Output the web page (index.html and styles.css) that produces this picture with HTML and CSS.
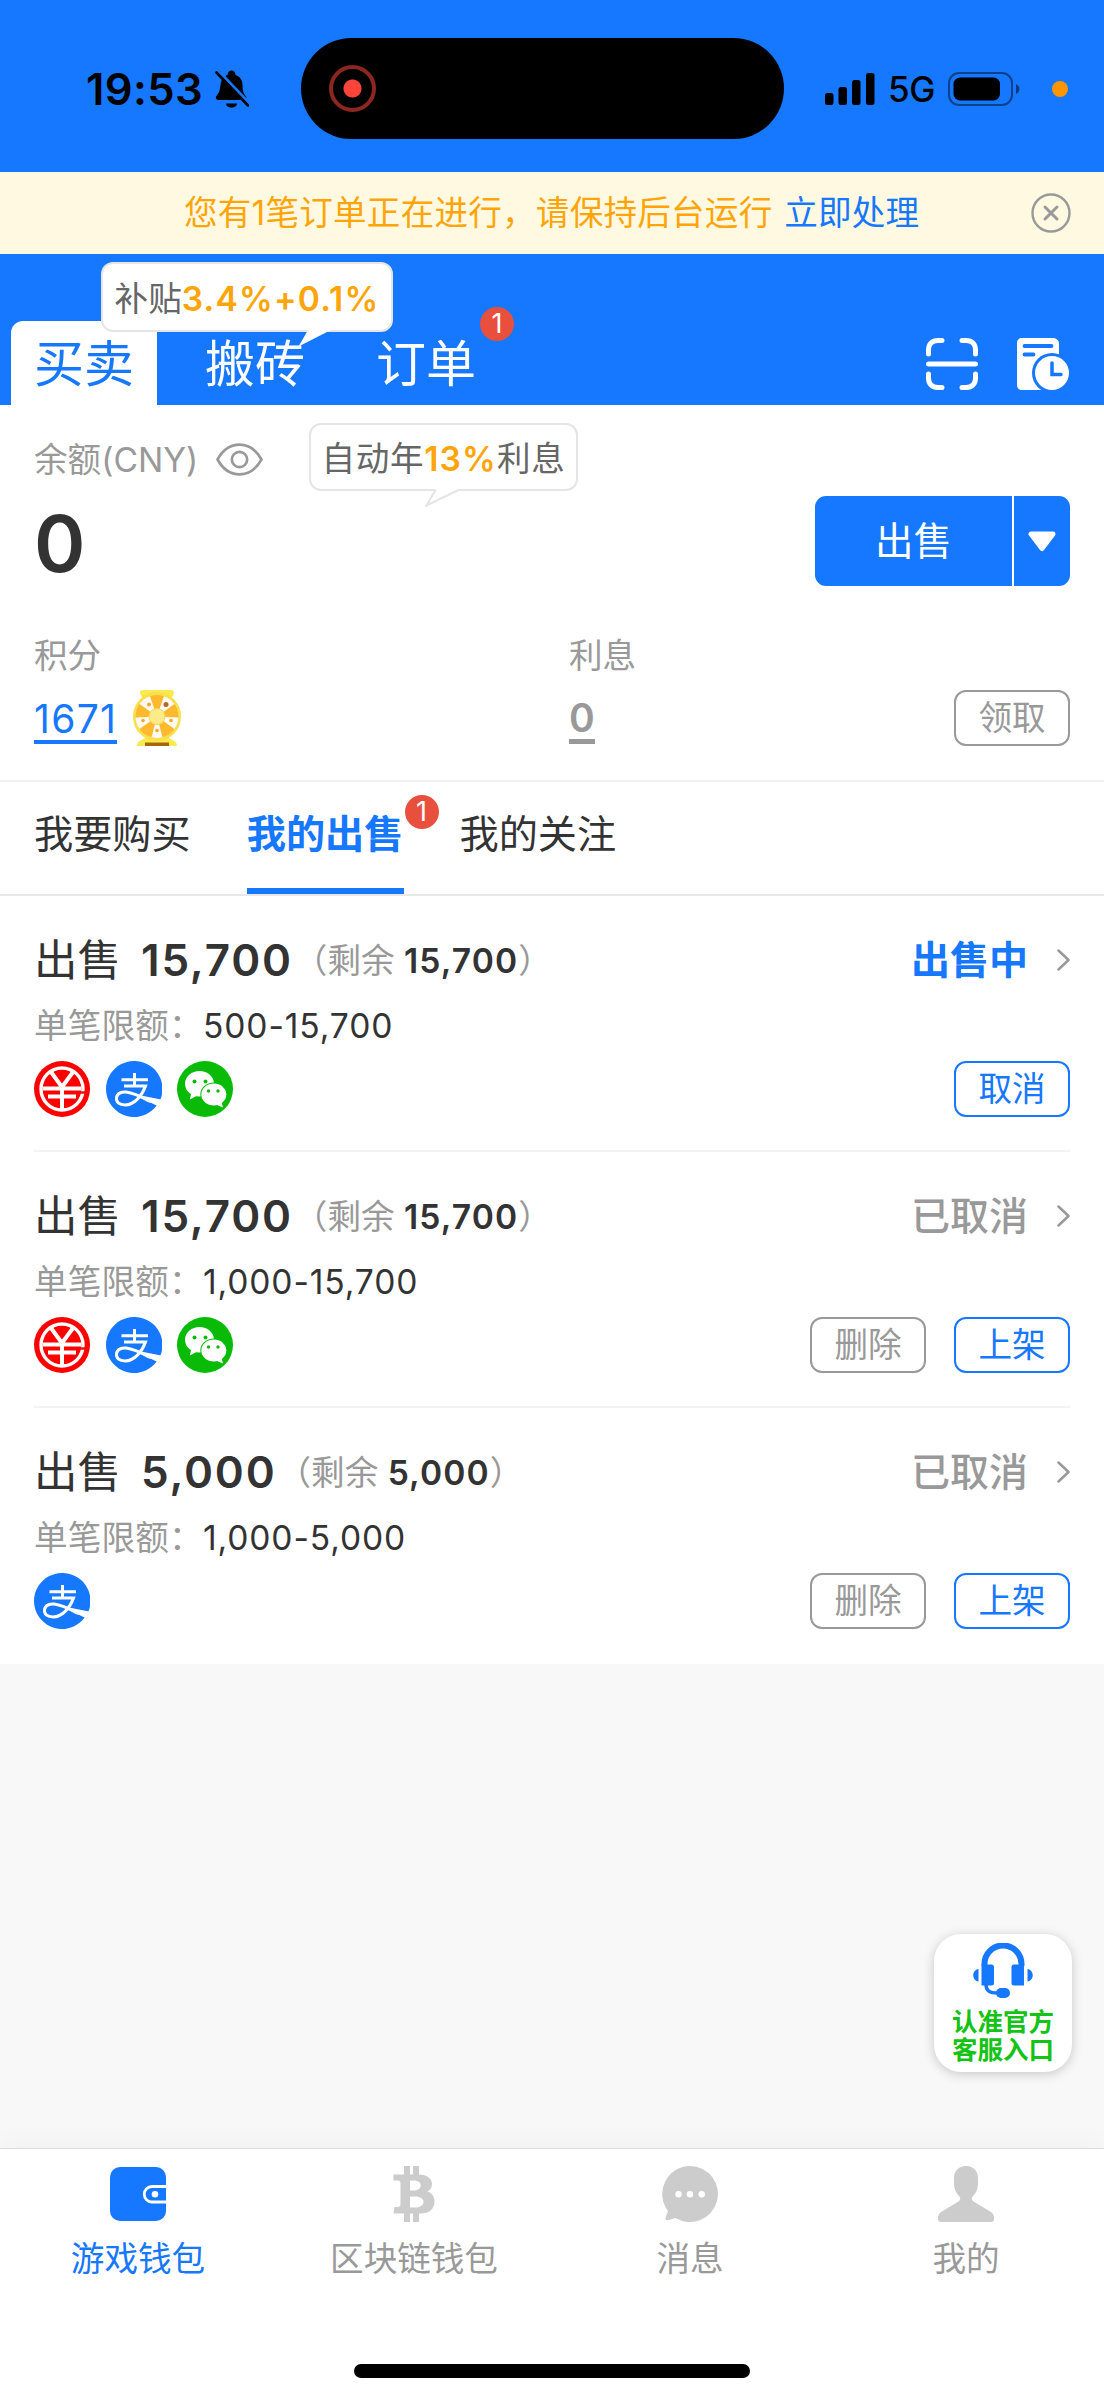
FILE: index.html
```html
<!DOCTYPE html>
<html lang="zh-CN">
<head>
  <meta charset="UTF-8">
  <title>游戏钱包</title>
  <link rel="stylesheet" href="styles.css">
</head>
<body>

  <!-- 图标 -->
  <svg width="0" height="0" class="icon-defs">
    <symbol id="i-bank" viewBox="0 0 56 56">
      <circle cx="28" cy="28" r="28" fill="#f00"/>
      <circle cx="28" cy="28" r="21" fill="none" stroke="#fff" stroke-width="3.4"/>
      <path d="M17 11l11 15 11-15M28 26v23M9 27.500h38M14 35.500h28" fill="none" stroke="#fff" stroke-width="4"/>
      <path d="M43 31.500h8" stroke="#f00" stroke-width="2.400"/>
    </symbol>
    <symbol id="i-alipay" viewBox="0 0 56 56">
      <path d="M28 0a28 28 0 1 0 23 44L55 37A28 28 0 0 0 28 0z" fill="#1677ff"/>
      <path d="M28.500 12v12M15.500 18.800h26.500M18 25h21.500C36.500 34 28.500 44 19 44 13 44 10 41 10.500 36.800 11 32.500 15.500 30.500 20 31c7 .8 14 4 22 8.500l12 3" fill="none" stroke="#fff" stroke-width="3"/>
      <path d="M35 34.500L55 38.500 51.500 45C46 42 39 39 33 36z" fill="#fff"/>
    </symbol>
    <symbol id="i-wechat" viewBox="0 0 56 56">
      <circle cx="28" cy="28" r="28" fill="#09bb07"/>
      <g fill="#fff">
        <ellipse cx="22.500" cy="22.800" rx="14.500" ry="12.800"/>
        <path d="M14.500 31l-1.700 7.500 7.700-4z"/>
      </g>
      <ellipse cx="36.800" cy="33.500" rx="13.500" ry="12" fill="#09bb07"/>
      <g fill="#fff">
        <ellipse cx="36.800" cy="33.500" rx="12.500" ry="11"/>
        <path d="M44.500 41l1.500 5.500-7-3z"/>
      </g>
      <g fill="#09bb07"><circle cx="17.500" cy="20.500" r="2"/><circle cx="28.500" cy="20.500" r="2"/><circle cx="31.500" cy="30" r="1.700"/><circle cx="41" cy="30" r="1.700"/></g>
    </symbol>
    <symbol id="i-arrow" viewBox="0 0 13 22">
      <path d="M1.500 1.500L11.500 11 1.500 20.500" fill="none" stroke="#999" stroke-width="2.500" stroke-linecap="round" stroke-linejoin="round"/>
    </symbol>
  </svg>

  <div class="status-bar">
    <div class="time">19:53</div>
    <svg class="bell" viewBox="0 0 34 38">
      <path d="M1 28C0 27 2.500 25 4 22 5.500 19 5 14 6.500 10.500 8 7 11 5.500 12.500 5 12.500-1 20.500-1 20.500 5 25 6.500 27.500 10 27.500 15c0 6 1 8.500 3.500 11.500 1 1.500.5 3.500-1 3.500H3C2 30 1 29 1 28z"/>
      <path d="M11 33.500h11c0 5.500-11 5.500-11 0z"/>
      <path d="M3 .500L34 33" stroke="#1677ff" stroke-width="3"/>
      <path d="M1.500 2.500L33 35.500" stroke="#000" stroke-width="2.600" stroke-linecap="round"/>
    </svg>
    <div class="island"><span class="rec"></span></div>
    <svg class="signal" viewBox="0 0 50 32">
      <rect x="0" y="20" width="8.500" height="12" rx="2.500"/>
      <rect x="13.500" y="14" width="8.500" height="18" rx="2.500"/>
      <rect x="27" y="7" width="8.500" height="25" rx="2.500"/>
      <rect x="41" y="0" width="8.500" height="32" rx="2.500"/>
    </svg>
    <div class="net">5G</div>
    <svg class="battery" viewBox="0 0 72 34">
      <rect x="1" y="1" width="63" height="32" rx="10" fill="none" stroke="#000" stroke-opacity=".45" stroke-width="2"/>
      <rect x="5.500" y="5.500" width="46.500" height="23" rx="6.500"/>
      <path d="M68 12c4.500 2 4.500 8 0 10z" fill-opacity=".5"/>
    </svg>
    <span class="mic-dot"></span>
  </div>

  <div class="notice">
    <p>您有1笔订单正在进行，请保持后台运行 <a>立即处理</a></p>
    <svg class="close" viewBox="0 0 40 40" fill="none" stroke="#999">
      <circle cx="20" cy="20" r="18.500" stroke-width="2.400"/>
      <path d="M14 14l12 12M26 14L14 26" stroke-width="3" stroke-linecap="round"/>
    </svg>
  </div>

  <header class="header">
    <div class="main-tab active">买卖</div>
    <div class="main-tab">搬砖
      <div class="bubble bubble-top">补贴<b>3.4%+0.1%</b>
        <svg class="tail" viewBox="0 0 36 18"><path d="M11 0L1.500 16.500 34 0z" fill="#fff"/></svg>
      </div>
    </div>
    <div class="main-tab">订单<i class="badge">1</i></div>
    <div class="header-icons">
      <svg width="52" height="52" viewBox="0 0 52 52" fill="none" stroke="#fff" stroke-width="5" stroke-linecap="round">
        <path d="M2.500 16v-4c0-6 3.500-9.500 9.500-9.500h4M36 2.500h4c6 0 9.500 3.500 9.500 9.500v4M2.500 36v4c0 6 3.500 9.500 9.500 9.500h4M36 49.500h4c6 0 9.500-3.500 9.500-9.500v-4M2.500 26h47"/>
      </svg>
      <svg width="52" height="52" viewBox="0 0 52 52">
        <path d="M5 0h31c3.500 0 6 2.500 6 6v46H5c-3 0-5-2-5-5V5c0-3 2-5 5-5z" fill="#fff"/>
        <path d="M7.500 8h27M7.500 16.500h9" stroke="#1677ff" stroke-width="3.800" stroke-linecap="round"/>
        <circle cx="35" cy="35" r="20" fill="#1677ff"/>
        <circle cx="35" cy="35" r="17" fill="#fff"/>
        <path d="M35 25v11.500h9" fill="none" stroke="#1677ff" stroke-width="3.500" stroke-linecap="round"/>
      </svg>
    </div>
  </header>

  <section class="balance">
    <div class="label-row">
      <span class="label">余额(CNY)</span>
      <svg class="eye" viewBox="0 0 46 32" fill="none" stroke="#999" stroke-width="2.600">
        <path d="M1.500 16C7 6 14 1.500 23 1.500S39 6 44.500 16C39 26 32 30.500 23 30.500S7 26 1.500 16z"/>
        <circle cx="23" cy="16" r="7.500"/>
      </svg>
      <div class="bubble bubble-rate">自动年<b>13%</b>利息
        <svg class="tail" viewBox="0 0 36 18"><path d="M11 0L1.500 16.500 34 0z" fill="#fff"/><path d="M10.500 1L1.500 16.500 33.500 1" fill="none" stroke="#e5e5e5" stroke-width="2"/></svg>
      </div>
    </div>
    <div class="amount-row">
      <div class="amount">0</div>
      <div class="sell-btn">
        <span class="sell-text">出售</span>
        <span class="sell-more"><svg width="30" height="21" viewBox="0 0 30 21"><path d="M4 3h22L15 17.500z" fill="#fff" stroke="#fff" stroke-width="5" stroke-linejoin="round"/></svg></span>
      </div>
    </div>
    <div class="stats">
      <div class="stat">
        <div class="label">积分</div>
        <div class="stat-value">
          <a class="points">1671</a>
          <svg class="wheel" viewBox="0 0 48 58">
            <path d="M10 1h28q3 0 3 3l-3 7H10L7 4q0-3 3-3zM4 57c0-5 5-6 8-8h24c3 2 8 3 8 8z" fill="#f9ea50"/>
            <ellipse cx="24" cy="27.500" rx="24" ry="24.500" fill="#f7e04a"/>
            <g transform="translate(24 27.500)">
              <circle r="21.500" fill="#ffb92e"/>
              <g fill="#fffaf0">
                <path d="M0 0L-7-20.300A21.500 21.500 0 0 0-17.500-12.500z"/>
                <path d="M0 0L7-20.300A21.500 21.500 0 0 1 17.500-12.500z"/>
                <path d="M0 0L21.500 1A21.500 21.500 0 0 1 17.500 12.500z"/>
                <path d="M0 0L-21.500 1A21.500 21.500 0 0 0-17.500 12.500z"/>
                <path d="M0 0L5.500 20.800A21.500 21.500 0 0 1-5.500 20.800z"/>
              </g>
              <circle cx="9" cy="-12" r="2.500" fill="#b5652a"/>
              <g fill="#ffa726"><circle cx="-8" cy="-12" r="2"/><circle cx="14" cy="4" r="1.800"/><circle cx="-14" cy="4" r="1.800"/><circle cy="14" r="1.800"/></g>
              <circle r="8" fill="#fdeb8a" stroke="#f5d75a"/>
            </g>
            <rect x="12" y="53.500" width="24" height="3.500" fill="#a8660a"/>
          </svg>
        </div>
      </div>
      <div class="stat">
        <div class="label">利息</div>
        <div class="stat-value"><a class="interest">0</a></div>
      </div>
      <div class="btn btn-gray">领取</div>
    </div>
  </section>

  <nav class="sub-tabs">
    <div class="sub-tab">我要购买</div>
    <div class="sub-tab active">我的出售<i class="badge">1</i></div>
    <div class="sub-tab">我的关注</div>
  </nav>

  <main class="list">
    <div class="item">
      <div class="row title-row">
        <span class="kind">出售</span><b class="total">15,700</b><span class="left">（剩余 <b>15,700</b>）</span>
        <span class="state on">出售中</span><svg class="arrow"><use href="#i-arrow"/></svg>
      </div>
      <div class="row limit"><span>单笔限额：</span>500-15,700</div>
      <div class="row pay-row">
        <svg class="pay"><use href="#i-bank"/></svg>
        <svg class="pay"><use href="#i-alipay"/></svg>
        <svg class="pay"><use href="#i-wechat"/></svg>
        <div class="btns"><div class="btn">取消</div></div>
      </div>
    </div>
    <div class="item">
      <div class="row title-row">
        <span class="kind">出售</span><b class="total">15,700</b><span class="left">（剩余 <b>15,700</b>）</span>
        <span class="state">已取消</span><svg class="arrow"><use href="#i-arrow"/></svg>
      </div>
      <div class="row limit"><span>单笔限额：</span>1,000-15,700</div>
      <div class="row pay-row">
        <svg class="pay"><use href="#i-bank"/></svg>
        <svg class="pay"><use href="#i-alipay"/></svg>
        <svg class="pay"><use href="#i-wechat"/></svg>
        <div class="btns"><div class="btn btn-gray">删除</div><div class="btn">上架</div></div>
      </div>
    </div>
    <div class="item">
      <div class="row title-row">
        <span class="kind">出售</span><b class="total">5,000</b><span class="left">（剩余 <b>5,000</b>）</span>
        <span class="state">已取消</span><svg class="arrow"><use href="#i-arrow"/></svg>
      </div>
      <div class="row limit"><span>单笔限额：</span>1,000-5,000</div>
      <div class="row pay-row">
        <svg class="pay"><use href="#i-alipay"/></svg>
        <div class="btns"><div class="btn btn-gray">删除</div><div class="btn">上架</div></div>
      </div>
    </div>
  </main>

  <!-- 客服入口 -->
  <div class="service">
    <svg width="60" height="55" viewBox="0 0 60 55">
      <path d="M11.500 23v-2a18.500 18.500 0 0 1 37 0v2" fill="none" stroke="#1677ff" stroke-width="6"/>
      <g fill="#1677ff">
        <path d="M8.500 21.500h10q2.500 0 2.500 2.500v16q0 2.500-2.500 2.500h-10zM51 21.500H41q-2.500 0-2.500 2.500v16q0 2.500 2.500 2.500h10z"/>
        <path d="M5.500 26v12.500c-7-1-7-11.500 0-12.500zM54.500 26v12.500c7-1 7-11.500 0-12.500z"/>
        <rect x="23" y="45" width="14" height="10" rx="5"/>
      </g>
      <path d="M13 41c0 7 3.500 9 12 9" fill="none" stroke="#1677ff" stroke-width="3.500"/>
    </svg>
    <span>认准官方<br>客服入口</span>
  </div>

  <footer class="tabbar">
    <div class="tab active">
      <svg viewBox="0 0 56 56">
        <rect y="1" width="56" height="54" rx="10" fill="#1677ff"/>
        <path d="M56 20.500H42a7.500 7.500 0 0 0 0 15.500h14" fill="none" stroke="#fff" stroke-width="2.800"/>
        <circle cx="45" cy="28.300" r="3.300" fill="#fff"/>
      </svg>
      <span>游戏钱包</span>
    </div>
    <div class="tab">
      <svg viewBox="0 0 56 56" fill="#ccc">
        <path fill-rule="evenodd" d="M7.500 8.500H32C42 8.500 46 13 46 18c0 4-2 6-4.500 7.500C46 27 48.500 30.500 48.500 35.500 48.500 43 43.500 47.500 34 47.500H7.500l1-6.500h3.200q2.800 0 2.800-3V17q0-2.500-2.500-2.500H7.500zM24 14.500v10h4c9 0 9-10 0-10zM24 30.500v11h5c11.500 0 11.500-11 0-11z"/>
        <path d="M18 0h6v10h-6zM27 0h6v10h-6zM18 46h6v10h-6zM27 46h6v10h-6z"/>
      </svg>
      <span>区块链钱包</span>
    </div>
    <div class="tab">
      <svg viewBox="0 0 56 56">
        <path d="M28 0a28 28 0 1 1-14.500 52L6 54.300q-3 .5-2.500-2.500L6 45A28 28 0 0 1 28 0z" fill="#ccc"/>
        <g fill="#fff"><circle cx="16.500" cy="28.300" r="3.200"/><circle cx="28" cy="28.300" r="3.200"/><circle cx="39.700" cy="28.300" r="3.200"/></g>
      </svg>
      <span>消息</span>
    </div>
    <div class="tab">
      <svg viewBox="0 0 56 56">
        <path d="M28 0c7.500 0 12 5 12 12v6c0 5-2 9-5 12-2 2-1.500 4 .5 5.500L53 46q3 2 3 5v2q0 3-3 3H3q-3 0-3-3v-2q0-3 3-5l17.500-10.500c2-1.500 2.500-3.500.5-5.500-3-3-5-7-5-12v-6C16 5 20.500 0 28 0z" fill="#ccc"/>
      </svg>
      <span>我的</span>
    </div>
    <div class="home-bar"></div>
  </footer>

</body>
</html>
```

FILE: styles.css
```css
* {
  box-sizing: border-box;
}

body {
  margin: 0;
  width: 1104px;
  height: 2400px;
  display: flex;
  flex-direction: column;
  position: relative;
  overflow: hidden;
  background-color: #f8f8f8;
  color: #333;
  font-family: Inter, "Noto Sans CJK SC", sans-serif;
  font-size: 33.6px;
  line-height: 48px;
  white-space: nowrap;
}

svg {
  display: block;
  flex: none;
}

.icon-defs {
  position: absolute;
}

i {
  font-style: normal;
}

/* 状态栏 */
.status-bar {
  height: 172px;
  flex: none;
  padding: 5px 0 0 86px;
  display: flex;
  align-items: center;
  background-color: #1677ff;
  color: #000;
}

.time {
  width: 129px;
  font-size: 43.5px;
  font-weight: 600;
  letter-spacing: 0.4px;
}

.bell {
  width: 34px;
  height: 38px;
}

.island {
  width: 483px;
  height: 101px;
  margin-left: 52px;
  padding-left: 28px;
  border-radius: 51px;
  background-color: #000;
  display: flex;
  align-items: center;
}

.rec {
  width: 47px;
  height: 47px;
  border: 4px solid #8c2620;
  border-radius: 50%;
  background: radial-gradient(circle, #ff453a 8.5px, transparent 9.5px);
}

.signal {
  width: 50px;
  height: 32px;
  margin-left: 41px;
}

.net {
  width: 60px;
  margin-left: 13px;
  font-size: 35px;
  font-weight: 500;
  letter-spacing: -0.5px;
}

.battery {
  width: 72px;
  height: 34px;
}

.mic-dot {
  width: 16px;
  height: 16px;
  margin-left: 32px;
  border-radius: 50%;
  background-color: #ff9500;
}

/* 通知 */
.notice {
  height: 82px;
  flex: none;
  display: flex;
  align-items: center;
  justify-content: space-between;
  padding: 0 33px 0 184px;
  background-color: #fff9e1;
  color: #ffa50a;
  letter-spacing: 0.22px;
}

.notice p {
  margin: 0;
}

.notice a {
  color: #1677ff;
  margin-left: 2px;
}

.close {
  width: 40px;
  height: 40px;
}

/* 顶部 */
.header {
  height: 151px;
  flex: none;
  display: flex;
  align-items: flex-end;
  gap: 25px;
  padding: 0 35px 0 11px;
  background-color: #1677ff;
  color: #fff;
}

.main-tab {
  position: relative;
  width: 146px;
  height: 84px;
  line-height: 87px;
  font-size: 50px;
  text-align: center;
}

.main-tab.active {
  background-color: #fff;
  color: #1677ff;
  border-radius: 12px 12px 0 0;
}

.badge {
  position: absolute;
  width: 34px;
  height: 34px;
  border-radius: 50%;
  background-color: #e94f3d;
  color: #fff;
  font-size: 27px;
  font-weight: 400;
  line-height: 33px;
  text-align: center;
}

.main-tab .badge {
  top: -14px;
  right: -15px;
}

.header-icons {
  margin-left: auto;
  display: flex;
  gap: 39px;
  padding-bottom: 15px;
}

.bubble {
  position: absolute;
  height: 68px;
  border: 2px solid #e5e5e5;
  border-radius: 12px;
  background-color: #fff;
  color: #666;
  font-size: 33.6px;
  line-height: 67px;
  text-align: center;
}

.bubble b {
  color: #ffa50a;
  font-weight: 600;
  letter-spacing: 1.2px;
}

.tail {
  position: absolute;
  width: 36px;
  height: 18px;
}

.bubble-top {
  left: -81px;
  top: -59px;
  width: 292px;
  height: 70px;
  line-height: 69px;
}

.bubble-top .tail {
  left: 194px;
  top: 66px;
}

.bubble-rate {
  left: 309px;
  top: 18px;
  width: 269px;
  letter-spacing: 0.6px;
}

.bubble-rate .tail {
  left: 114px;
  top: 64px;
}

/* 余额 */
.balance {
  position: relative;
  height: 377px;
  flex: none;
  padding: 31px 34px 0;
  background-color: #fff;
  border-bottom: 2px solid #f0f0f0;
}

.label-row {
  display: flex;
  align-items: center;
}

.label {
  color: #999;
}

.eye {
  width: 47px;
  height: 33px;
  margin: -2px 0 0 18px;
}

.amount-row {
  display: flex;
  justify-content: space-between;
  margin-top: 12px;
  height: 90px;
}

.amount {
  font-size: 78px;
  font-weight: 600;
  line-height: 96px;
}

.sell-btn {
  width: 255px;
  display: flex;
  border-radius: 11px;
  background-color: #1677ff;
  color: #fff;
  font-size: 38.5px;
  line-height: 90px;
}

.sell-text {
  flex: 1;
  text-align: center;
}

.sell-more {
  width: 58px;
  display: flex;
  align-items: center;
  justify-content: center;
  border-left: 2px solid #fff;
}

.stats {
  display: flex;
  align-items: flex-end;
  margin-top: 46px;
}

.stat {
  width: 535px;
}

.stat + .stat {
  width: auto;
}

.stat-value {
  height: 64px;
  margin-top: 5px;
  display: flex;
  align-items: center;
  font-size: 39px;
}

.stat-value a {
  line-height: 42px;
  padding-top: 7px;
}

.points {
  color: #1677ff;
  letter-spacing: 1.3px;
  border-bottom: 4px solid #1677ff;
}

.interest {
  color: #999;
  font-weight: 600;
  border-bottom: 5px solid #999;
}

.wheel {
  width: 48px;
  height: 58px;
  margin: 2px 0 0 16px;
}

.btn {
  width: 116px;
  height: 56px;
  border: 2px solid #1677ff;
  border-radius: 12px;
  color: #1677ff;
  line-height: 52px;
  text-align: center;
}

.btn-gray {
  border-color: #999;
  color: #999;
}

.stats .btn {
  margin: 0 0 3px auto;
}

/* 二级标签 */
.sub-tabs {
  height: 114px;
  flex: none;
  display: flex;
  gap: 56px;
  padding-left: 34px;
  background-color: #fff;
  border-bottom: 2px solid #e8e8e8;
  font-size: 39.2px;
  line-height: 103px;
}

.sub-tab {
  position: relative;
}

.sub-tab.active {
  color: #1677ff;
  font-weight: 600;
  border-bottom: 6px solid #1677ff;
}

.sub-tab .badge {
  top: 13px;
  right: -35px;
}

/* 列表 */
.list {
  flex: none;
  background-color: #fff;
}

.item {
  height: 256px;
  margin: 0 34px;
  padding-top: 33px;
  border-bottom: 2px solid #f3f3f3;
}

.item:last-child {
  border-bottom: none;
}

.row {
  display: flex;
  align-items: center;
}

.title-row {
  height: 62px;
}

.kind {
  font-size: 43.5px;
  margin-right: 20px;
}

.total {
  font-size: 44px;
  font-weight: 600;
  letter-spacing: 1.8px;
}

.left {
  margin: 1px 0 0 1px;
  color: #999;
}

.left b {
  color: #333;
  font-weight: 600;
  letter-spacing: 1.1px;
}

.state {
  margin-left: auto;
  color: #999;
  font-size: 39px;
  font-weight: 500;
}

.state.on {
  color: #1677ff;
  font-weight: 600;
}

.arrow {
  width: 13px;
  height: 22px;
  margin-left: 29px;
}

.limit {
  height: 70px;
  letter-spacing: 0.9px;
}

.limit span {
  color: #999;
  letter-spacing: 0.2px;
}

.pay-row {
  gap: 15.5px;
}

.pay {
  width: 56px;
  height: 56px;
}

.btns {
  display: flex;
  gap: 28px;
  margin-left: auto;
}

/* 客服 */
.service {
  position: absolute;
  right: 32px;
  top: 1934px;
  width: 138px;
  height: 138px;
  padding-top: 9px;
  display: flex;
  flex-direction: column;
  align-items: center;
  border-radius: 27px;
  background-color: #fff;
  box-shadow: 0 2px 12px rgba(0, 0, 0, 0.2);
  color: #14c314;
  font-size: 25.5px;
  font-weight: 600;
  line-height: 28px;
}

.service span {
  margin-top: 10px;
}

/* 底部导航 */
.tabbar {
  height: 252px;
  flex: none;
  margin-top: auto;
  display: flex;
  flex-wrap: wrap;
  justify-content: center;
  align-content: flex-start;
  background-color: #fff;
  border-top: 1px solid #ddd;
  box-shadow: 0 -6px 24px rgba(0, 0, 0, 0.03);
}

.tab {
  width: 25%;
  padding-top: 17px;
  display: flex;
  flex-direction: column;
  align-items: center;
  color: #999;
}

.tab.active {
  color: #1677ff;
}

.tab svg {
  width: 56px;
  height: 56px;
}

.tab span {
  margin-top: 13px;
}

.home-bar {
  width: 396px;
  height: 14px;
  margin-top: 81px;
  border-radius: 7px;
  background-color: #000;
}
```
